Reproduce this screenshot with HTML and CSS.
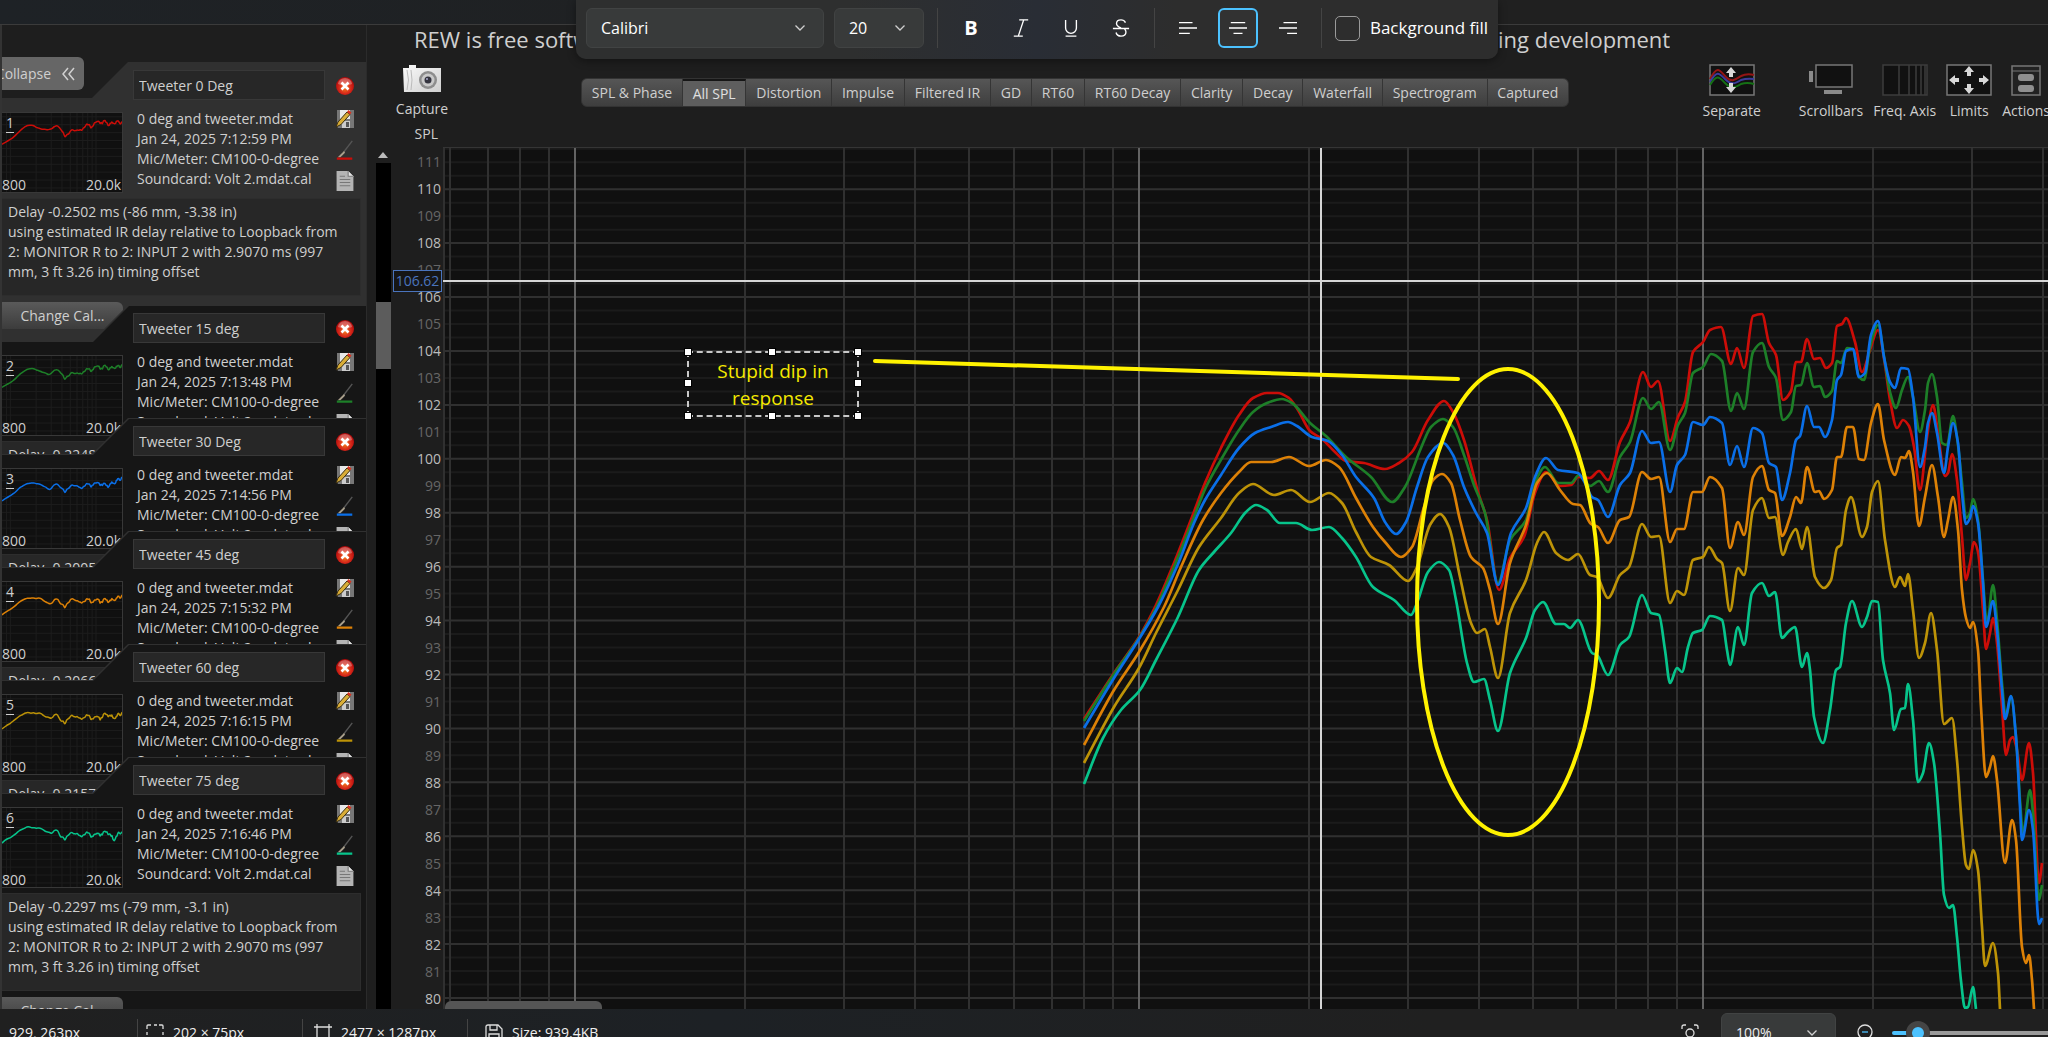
FILE: index.html
```html
<!DOCTYPE html>
<html lang="en">
<head>
  <meta charset="UTF-8">
  <meta name="viewport" content="width=device-width, initial-scale=1.0">
  <title>REW - All SPL</title>
  <link rel="stylesheet" href="styles.css">
</head>
<body>
  <svg class="defs" aria-hidden="true">
    <defs>
      <radialGradient id="redBall" cx="50%" cy="60%" r="55%">
        <stop offset="0" stop-color="#f5811e"/><stop offset=".6" stop-color="#d6281a"/><stop offset="1" stop-color="#b00a0a"/>
      </radialGradient>
      <linearGradient id="camBody" x1="0" y1="0" x2="1" y2="1">
        <stop offset="0" stop-color="#fafafa"/><stop offset="1" stop-color="#cfcfcf"/>
      </linearGradient>
    </defs>
    <symbol id="ic-close" viewBox="0 0 18 18">
      <circle cx="9" cy="9" r="9" fill="url(#redBall)"/>
      <path d="M2 7a7 6 0 0 1 14 0q-7 3-14 0z" fill="#fff" opacity=".3"/>
      <path d="M5.5 5.5l7 7M12.500 5.500l-7 7" stroke="#fff" stroke-width="2.600"/>
    </symbol>
    <symbol id="ic-edit" viewBox="0 0 20 20">
      <path d="M2 1h17v18H3l-1-2z" fill="#777"/>
      <path d="M5 1h10v9H5z" fill="#e8e8e8"/><path d="M7 12h8v7H7z" fill="#ccc"/><path d="M11 13h3v5h-3z" fill="#555"/>
      <path d="M1 18l2-5L12 3l3 2.500L6 15.500z" fill="#d9ad36" stroke="#3b2f12"/>
      <path d="M12 3l1.500-2 3 2.500L15 5.500z" fill="#d8331f"/>
    </symbol>
    <symbol id="ic-pen" viewBox="0 0 18 22">
      <path d="M17 1L7 14" stroke="#555" stroke-width="1.500"/><path d="M8 12l-7 7 3 0 5-5z" fill="#aaa08c"/>
      <path d="M0 20.500h17" stroke="currentColor" stroke-width="2.500"/>
    </symbol>
    <symbol id="ic-note" viewBox="0 0 16 19">
      <path d="M0 0h11l5 5v14H0z" fill="#b4b4b4"/><path d="M11 0v5h5" fill="#e4e4e4" stroke="#777"/>
      <path d="M3 5h5M3 8h10M3 11h10M3 14h10" stroke="#777"/>
    </symbol>
    <symbol id="ic-chev" viewBox="0 0 12 12">
      <path d="M1.500 3.500L6 8l4.500-4.500" fill="none" stroke="#d0d0d0" stroke-width="1.300"/>
    </symbol>
  </svg>

  <header class="topbar">
    <form class="format-bar">
      <div class="pick pick-font">
        <select aria-label="Font"><option>Calibri</option></select>
        <svg><use href="#ic-chev"/></svg>
      </div>
      <div class="pick pick-size">
        <select aria-label="Font size"><option>20</option></select>
        <svg><use href="#ic-chev"/></svg>
      </div>
      <span class="divider"></span>
      <div class="tools">
        <button type="button" class="tool bold" aria-label="Bold">B</button>
        <button type="button" class="tool" aria-label="Italic"><svg viewBox="0 0 20 20"><path d="M8 1h10M2 19h10M13 1L7 19"/></svg></button>
        <button type="button" class="tool" aria-label="Underline"><svg viewBox="0 0 20 20"><path d="M4 1v9a6 6 0 0 0 12 0V1M4 19h12"/></svg></button>
        <button type="button" class="tool" aria-label="Strikethrough"><svg viewBox="0 0 20 20"><path d="M15 4c-1-2-3-3-5-3-3 0-5 1.500-5 4 0 3 2.500 4 5 5M14 11c1 1 1.500 2 1.500 3.500 0 3-2.500 4.500-5.500 4.500s-5-1.500-5.500-4M1 10.500h18"/></svg></button>
      </div>
      <span class="divider"></span>
      <div class="tools">
        <button type="button" class="tool" aria-label="Align left"><svg viewBox="0 0 20 20"><path d="M0 4h15M0 10h20M0 16h12"/></svg></button>
        <button type="button" class="tool active" aria-label="Align center"><svg viewBox="0 0 20 20"><path d="M2 4h16M0 10h20M5 16h10"/></svg></button>
        <button type="button" class="tool" aria-label="Align right"><svg viewBox="0 0 20 20"><path d="M5 4h15M0 10h20M9 16h11"/></svg></button>
      </div>
      <span class="divider"></span>
      <label class="fill"><input type="checkbox"> Background fill</label>
    </form>
  </header>

  <main>
    <aside>
      <button class="collapse">Collapse <svg viewBox="0 0 14 14"><path d="M7 1L2 7l5 6M13 1L8 7l5 6"/></svg></button>
      <div class="cards" id="cards"></div>
    </aside>
    <div class="scroll">
      <i class="up"></i>
      <div class="track"><div class="thumb"></div></div>
    </div>

    <section class="graph">
      <div class="banner"><span>REW is free softw</span><span>ing development</span></div>
      <div class="actions">
        <button class="action capture">
          <svg viewBox="0 0 38 28"><path d="M6 0h7v3h25v24H1L0 3h6z" fill="url(#camBody)"/><path d="M4 5q3 10 0 20M8 5q2 10 0 20" stroke="#bbb" fill="none"/><circle cx="25" cy="15" r="9" fill="#8d8d8d"/><circle cx="25" cy="15" r="6.500" fill="#c9c9c9"/><circle cx="25" cy="15" r="3.500" fill="#34343f"/><circle cx="24" cy="14" r="1" fill="#aac"/></svg>
          Capture
        </button>
        <nav class="tabs">
          <button>SPL &amp; Phase</button><button class="on">All SPL</button><button>Distortion</button><button>Impulse</button><button>Filtered IR</button><button>GD</button><button>RT60</button><button>RT60 Decay</button><button>Clarity</button><button>Decay</button><button>Waterfall</button><button>Spectrogram</button><button>Captured</button>
        </nav>
        <div class="right-tools">
          <button class="action separate">
            <svg viewBox="0 0 46 32"><rect x="1" y="1" width="44" height="30" fill="#111" stroke="#777" stroke-width="1.500"/>
              <g fill="none" stroke-width="2"><path d="M1 15C8 2 10 5 16 12s10 4 16 0q6-3 13-1" stroke="#941515"/><path d="M1 18C8 6 10 9 16 15s10 5 16 1q6-2 13-1" stroke="#3c3c9a"/><path d="M1 21C8 10 10 13 16 19s10 5 16 1q6-2 13 0" stroke="#157015"/></g>
              <path d="M22 3l5 6h-3v4h-4V9h-3zM22 29l5-6h-3v-4h-4v4h-3z" fill="#d8d8d8"/></svg>
            Separate
          </button>
          <button class="action">
            <svg viewBox="0 0 46 32"><rect x="8" y="1" width="36" height="22" fill="#111" stroke="#777" stroke-width="1.500"/><path d="M1 7h4v11H1zM16 26h18v4H16z" fill="#8a8a8a"/></svg>
            Scrollbars
          </button>
          <button class="action">
            <svg viewBox="0 0 46 32"><rect x="1" y="1" width="44" height="30" fill="#111" stroke="#3d3d3d" stroke-width="1.500"/><path d="M17 1v30M27 1v30M34 1v30M39 1v30M43 1v30" stroke="#3d3d3d" stroke-width="1.500"/></svg>
            Freq. Axis
          </button>
          <button class="action">
            <svg viewBox="0 0 46 32"><rect x="1" y="1" width="44" height="30" fill="#111" stroke="#777" stroke-width="1.500"/><path d="M23 2l5 6h-3v4h-4V8h-3zM23 30l5-6h-3v-4h-4v4h-3zM3 16l6-5v3h4v4H9v3zM43 16l-6-5v3h-4v4h4v3z" fill="#d8d8d8"/></svg>
            Limits
          </button>
          <button class="action">
            <svg viewBox="0 0 46 32"><rect x="9" y="2" width="28" height="29" fill="#222" stroke="#777" stroke-width="1.500"/><path d="M9 7h28" stroke="#777"/><rect x="15" y="10" width="16" height="7" rx="3" fill="#8f8f8f"/><rect x="15" y="21" width="16" height="7" rx="3" fill="#8f8f8f"/></svg>
            Actions
          </button>
        </div>
      </div>
      <div class="plot-area">
        <div class="axis">
          <span class="unit">SPL</span>
          <div class="scale" id="scale"></div>
          <output class="readout">106.62</output>
        </div>
        <div class="plot">
          <svg class="chart" id="chart" viewBox="443 148 1605 861" preserveAspectRatio="none"></svg>
          <div class="note">
            Stupid dip in<br>response
            <i class="h tl"></i><i class="h tc"></i><i class="h tr"></i><i class="h ml"></i><i class="h mr"></i><i class="h bl"></i><i class="h bc"></i><i class="h br"></i>
          </div>
          <div class="hbar"></div>
        </div>
      </div>
    </section>
  </main>

  <footer>
    <div class="cell c1">929, 263px</div>
    <div class="cell c2"><svg viewBox="0 0 18 18"><path d="M1 5V2q0-1 1-1h3M8 1h3M13 1h3q1 0 1 1v3M1 8v3M17 8v3M1 13v4M17 13v4"/></svg>202 × 75px</div>
    <div class="cell c3"><svg viewBox="0 0 18 18"><path d="M3 0v18M15 0v18M0 3h18M0 15h18"/></svg>2477 × 1287px</div>
    <div class="cell c4"><svg viewBox="0 0 18 18"><path d="M3 1h10l4 4v10q0 2-2 2H3q-2 0-2-2V3q0-2 2-2zM5 1v5h7V1M4 17v-7h10v7"/></svg>Size: 939.4KB</div>
    <div class="zoom">
      <svg class="fit" viewBox="0 0 18 18"><path d="M1 5V3q0-2 2-2h2M13 1h2q2 0 2 2v2M1 13v2q0 2 2 2h2M17 13v2q0 2-2 2h-2"/><circle cx="9" cy="9" r="4"/></svg>
      <div class="pick pick-zoom">
        <select aria-label="Zoom"><option>100%</option></select>
        <svg><use href="#ic-chev"/></svg>
      </div>
      <svg class="out" viewBox="0 0 18 18"><circle cx="9" cy="8" r="7"/><path d="M14 13l3 3"/><path class="minus" d="M6 8h6"/></svg>
      <input type="range" aria-label="Zoom level" min="0" max="100" value="9">
    </div>
  </footer>
  <script src="app.js"></script>
</body>
</html>
```
FILE: styles.css
```css
* { box-sizing: border-box; }
body {
  margin: 0;
  height: 100vh;
  display: flex;
  flex-direction: column;
  overflow: hidden;
  background: #1e1e1e;
  color: #cfcfcf;
  font: 14px/20px "Open Sans", "Noto Sans", sans-serif;
}
button, select, input { font: inherit; color: inherit; }
button { border: 0; padding: 0; background: none; }
.defs { position: absolute; width: 0; height: 0; }

/* text formatting bar */
.topbar {
  flex: none;
  height: 25px;
  background: linear-gradient(90deg, #1e2226, #202020 60%);
  border-bottom: 1px solid #3b3b3b;
  display: flex;
  justify-content: center;
  padding-left: 26px;
}
.format-bar {
  position: relative;
  z-index: 2;
  flex: none;
  height: 59px;
  padding: 0 10px 3px;
  display: flex;
  align-items: center;
  background: linear-gradient(90deg, #2e2f2f 30%, #292d35 50%, #2d2d2d 65%);
  border-radius: 0 0 10px 10px;
  box-shadow: 0 2px 8px rgba(0, 0, 0, .4);
  color: #fff;
  font-size: 16px;
}
.pick { position: relative; }
.pick select {
  width: 100%;
  height: 40px;
  padding: 0 14px;
  appearance: none;
  background: #383a3a;
  border: 1px solid #414343;
  border-radius: 6px;
}
.pick svg { position: absolute; right: 18px; top: 14px; width: 12px; height: 12px; }
.pick-font { width: 238px; margin-right: 10px; }
.pick-size { width: 90px; }
.divider { width: 1px; height: 40px; margin: 0 13px; background: #444; }
.tools { display: flex; gap: 10px; }
.tool { width: 40px; height: 40px; border-radius: 6px; border: 2px solid transparent; }
.tool svg { width: 18px; height: 18px; display: block; margin: auto; fill: none; stroke: #fff; stroke-width: 1.5; }
.tool.active { border-color: #4cc2ff; background: #323232; }
.bold { font-weight: 700; font-size: 20px; }
.fill { display: flex; align-items: center; gap: 10px; font-size: 17px; }
.fill input {
  appearance: none;
  width: 25px;
  height: 25px;
  margin: 0;
  border: 1px solid #9a9a9a;
  border-radius: 5px;
}

main { flex: 1; min-height: 0; display: flex; border-left: 2px solid #333; }

/* measurement list */
aside {
  width: 365px;
  flex: none;
  overflow: hidden;
  border-right: 1px solid #2b2b2b;
  padding-top: 32px;
}
.collapse {
  position: relative;
  z-index: 1;
  width: 82px;
  height: 33px;
  margin-bottom: -28px;
  background: #666;
  border-radius: 0 6px 6px 0;
  display: flex;
  align-items: center;
  justify-content: flex-end;
  gap: 10px;
  padding-right: 9px;
  overflow: hidden;
}
.collapse svg { flex: none; width: 14px; height: 14px; fill: none; stroke: #d0d0d0; stroke-width: 1.5; }
.card {
  position: relative;
  height: 280px;
  margin-top: -167px;
  display: grid;
  grid-template-columns: 121px 192px 20px;
  grid-template-rows: 30px 90px 98px 27px;
  column-gap: 10px;
  padding-top: 8px;
  background: #303030;
  clip-path: polygon(0 36px, 90px 36px, 126px 0, 100% 0, 100% 100%, 0 100%);
}
.card::before {
  content: "";
  position: absolute;
  inset: 0;
  background: #161616;
  clip-path: polygon(0 37px, 91px 37px, 127px 1px, 100% 1px, 100% 100%, 0 100%);
}
.card > * { position: relative; }
.card:first-child { margin-top: 0; }
.card:nth-child(2) { margin-top: -37px; }
.card.selected::before { background: #303030; }
.title {
  grid-column: 2;
  width: 100%;
  min-width: 0;
  height: 30px;
  padding: 0 5px;
  background: #272727;
  border: 1px solid #383838;
}
.close { width: 18px; height: 18px; margin: 7px 0 0 1px; }
.close svg { display: block; width: 18px; height: 18px; }
.mini { grid-row: 2; grid-column: 1; margin-top: 12px; height: 81px; border: 1px solid #383838; border-left: 0; background: #101010; }
.mini svg { display: block; width: 100%; height: 100%; }
.mini b { position: absolute; left: 4px; top: 1px; font-weight: 400; border-bottom: 1px solid #cfcfcf; line-height: 18px; }
.mini span { position: absolute; bottom: -3px; left: 0; }
.mini span + span { left: auto; right: 1px; }
.info { grid-column: 2; padding: 9px 0 0 4px; white-space: nowrap; overflow: hidden; }
.icons { display: flex; flex-direction: column; padding-top: 9px; gap: 11px; }
.icons svg { display: block; flex: none; width: 20px; height: 20px; }
.notes { grid-column: 1 / 4; margin: 8px -6px 0 0; height: 98px; padding: 3px 6px; background: #272727; border: 1px solid #2d2d2d; border-left: 0; }
.cal { grid-row: 4; grid-column: 1; margin-top: 14px; height: 27px; background: linear-gradient(#5a5a5a, #3c3c3c); border-radius: 0 6px 0 0; }

.scroll { flex: none; width: 25px; padding: 125px 0 0 9px; }
.up { display: block; width: 0; height: 0; margin: 2px 0 5px 2px; border: 5px solid transparent; border-top: 0; border-bottom: 6px solid #bbb; }
.track { width: 15px; height: 100%; padding-top: 139px; background: #000; }
.thumb { height: 67px; background: #5c5c5c; }

/* graph */
.graph { flex: 1; min-width: 0; display: flex; flex-direction: column; }
.banner { height: 32px; padding-left: 22px; font-size: 22px; line-height: 28px; white-space: nowrap; display: flex; }
.banner span { width: 162px; overflow: hidden; }
.banner span + span { width: auto; margin-left: 922px; }
.actions { display: flex; align-items: flex-start; height: 66px; flex: none; }
.action { display: flex; flex-direction: column; align-items: center; white-space: nowrap; line-height: 18px; padding-top: 7px; }
.action svg { width: 46px; height: 32px; margin-bottom: 6px; }
.capture { width: 60px; margin-right: 129px; }
.capture svg { width: 38px; height: 28px; margin: 1px 0 7px; }
.tabs { display: flex; flex: none; width: 988px; height: 29px; margin-top: 21px; background: linear-gradient(#565656, #3e3e3e); border: 1px solid #333; border-radius: 6px; }
.tabs button { flex: auto; border-right: 1px solid #353535; padding: 1px 8px 0; }
.tabs button:last-child { border: 0; }
.tabs .on { background: #5e5e5e; border-top: 2px solid #151515; padding-top: 0; color: #e0e0e0; }
.right-tools { margin-left: auto; display: flex; gap: 10px; margin-right: -2px; }
.right-tools .separate { margin-right: 28px; }

.plot-area { flex: 1; min-height: 0; display: flex; margin-top: 24px; }
.axis { position: relative; width: 51px; flex: none; text-align: right; padding-right: 2px; }
.unit { position: absolute; right: 5px; top: -23px; }
.scale { height: 100%; overflow: hidden; padding-top: 1px; }
.scale span { display: block; line-height: 27px; color: #666; }
.scale .even { color: #bcbcbc; }
.readout {
  position: absolute;
  right: 1px;
  top: 123px;
  width: 49px;
  height: 22px;
  background: #161616;
  border: 1px solid #4a74bd;
  color: #4a74bd;
  text-align: center;
}
.plot { position: relative; flex: 1; min-width: 0; background: #101010; border-top: 1px solid #353535; overflow: hidden; }
.chart { position: absolute; inset: 0; width: 100%; height: 100%; }
.chart *, .mini svg * { vector-effect: non-scaling-stroke; fill: none; }
.trace { stroke-width: 2.7; stroke-linejoin: round; }
.mini .trace { stroke-width: 1.5; }
.grid { stroke: #1b1b1b; stroke-width: 2; }
.grid.major { stroke: #303030; }
.grid.decade { stroke: #636363; }
.mini .grid { stroke: #1d1d1d; stroke-width: 1; }
.cursor { stroke: #d5d5d5; stroke-width: 2; }
.marker { stroke: #fff200; stroke-width: 4; stroke-linecap: round; }
.note {
  position: absolute;
  left: 244px;
  top: 203px;
  width: 172px;
  height: 66px;
  padding-top: 5px;
  border: 2px dashed #c8c8c8;
  color: #f5e900;
  font-size: 19px;
  line-height: 27px;
  text-align: center;
}
.h { position: absolute; width: 6px; height: 6px; margin: -4px; background: #fff; outline: 1px solid #000; }
.tl, .ml, .bl { left: 0; }
.tc, .bc { left: 50%; }
.tr, .mr, .br { right: 0; }
.tl, .tc, .tr { top: 0; }
.ml, .mr { top: 50%; }
.bl, .bc, .br { bottom: 0; }
.hbar { position: absolute; left: 2px; bottom: 0; width: 157px; height: 8px; background: #555; border-radius: 6px 6px 0 0; }

/* status bar */
footer { flex: none; height: 28px; overflow: hidden; display: flex; background: linear-gradient(90deg, #202020, #1d2125 35%, #202020 70%); color: #eee; }
footer svg { fill: none; stroke: #ddd; stroke-width: 1.3; }
.cell { height: 48px; flex: none; display: flex; align-items: center; gap: 9px; padding-left: 9px; position: relative; }
.cell + .cell::before { content: ""; position: absolute; left: 0; top: 10px; width: 1px; height: 30px; background: #444; }
.cell svg { width: 18px; height: 18px; }
.c1 { width: 137px; }
.c2 { width: 165px; }
.c3 { width: 165px; padding-left: 12px; }
.c4 { padding-left: 18px; }
.zoom { margin-left: auto; height: 48px; display: flex; align-items: center; flex: none; }
.fit { width: 18px; height: 18px; margin-right: 22px; }
.pick-zoom { width: 115px; margin-right: 20px; }
.out { width: 18px; height: 18px; margin-right: 18px; }
.out .minus { stroke: #4cc2ff; }
.zoom input {
  appearance: none;
  width: 180px;
  height: 4px;
  margin: 0 -24px 0 0;
  border-radius: 2px;
  background: linear-gradient(90deg, #4cc2ff 26px, #9a9a9a 26px);
}
.zoom input::-webkit-slider-thumb { appearance: none; width: 24px; height: 24px; border-radius: 50%; background: #4cc2ff; border: 6px solid #454545; }
```
FILE: app.js
```js
// plot coordinates: 1 kHz sits at x=1139, one decade is 564 wide, 1 dB is 26.96 high
const xOf = f => 1139 + 564 * Math.log10(f / 1000);
const yOf = db => 458.8 + (100 - db) * 26.96;

const measurements = [
  { name: 'Tweeter 0 Deg', time: '7:12:59', color: '#cc0d08', delay: '-0.2502 ms (-86 mm, -3.38 in)',
    pts: '1084,719 1114,673 1139,637 1156,605 1174,563 1192,517 1205,483 1221,448 1239,415 1253,398 1267,393 1278,393 1289,398 1298,410 1310,431 1322,439 1335,452 1346,461 1364,463 1385,469 1399,463 1412,452 1428,420 1444,401 1453,412 1464,440 1478,492 1487,520 1499,590 1510,558 1524,537 1535,493 1546,472 1560,486 1571,485 1578,477 1590,478 1599,471 1608,480 1620,442 1630,422 1643,372 1651,387 1658,381 1670,441 1678,417 1685,402 1693,352 1703,342 1710,330 1721,327 1731,364 1737,348 1744,368 1753,316 1762,314 1769,343 1776,355 1783,400 1791,391 1796,362 1801,362 1807,339 1814,359 1820,358 1826,368 1832,363 1837,326 1842,324 1846,318 1855,342 1862,372 1870,350 1878,330 1885,365 1890,400 1897,428 1903,420 1909,426 1914,447 1920,490 1927,437 1933,405 1938,433 1945,476 1948,473 1952,454 1957,480 1962,537 1966,580 1970,563 1974,542 1978,552 1983,610 1986,649 1990,633 1993,618 1997,643 2002,707 2006,755 2010,740 2013,737 2017,750 2022,780 2029,743 2033,773 2039,883 2042,863' },
  { name: 'Tweeter 15 deg', time: '7:13:48', color: '#1d7f28', delay: '-0.2248 ms (-77 mm, -3.04 in)',
    pts: '1084,721 1114,674 1139,638 1156,608 1176,562 1194,517 1206,487 1222,458 1239,430 1253,412 1267,403 1282,399 1292,403 1310,423 1326,436 1346,457 1371,477 1392,502 1405,487 1421,448 1431,427 1443,419 1453,427 1464,455 1474,485 1485,513 1498,583 1510,540 1526,520 1535,483 1545,467 1558,483 1571,483 1579,475 1590,486 1599,481 1608,492 1620,457 1630,442 1643,398 1651,409 1659,402 1670,450 1678,425 1685,413 1693,373 1703,367 1711,354 1722,361 1731,411 1737,393 1744,409 1753,352 1762,343 1769,367 1776,378 1783,420 1791,412 1796,386 1801,385 1807,363 1814,387 1820,386 1825,397 1832,391 1837,361 1841,363 1847,348 1853,349 1859,377 1864,380 1870,347 1878,325 1885,363 1890,392 1896,408 1902,390 1908,377 1913,397 1920,432 1925,410 1928,383 1932,374 1937,397 1942,443 1947,445 1953,416 1957,437 1962,483 1966,518 1970,513 1973,499 1978,520 1983,580 1987,623 1993,585 1997,620 2002,683 2006,717 2011,696 2016,737 2020,800 2023,833 2030,790 2033,813 2039,900 2042,885' },
  { name: 'Tweeter 30 Deg', time: '7:14:56', color: '#0a6fe8', delay: '-0.2005 ms (-69 mm, -2.71 in)',
    pts: '1084,728 1114,678 1139,639 1158,607 1178,564 1194,523 1205,500 1221,475 1239,448 1255,433 1271,427 1288,422 1297,426 1312,437 1328,441 1342,455 1356,477 1374,498 1385,522 1396,534 1406,522 1417,487 1428,457 1443,443 1453,455 1464,487 1476,513 1487,533 1498,585 1511,533 1526,508 1535,477 1546,458 1558,470 1578,473 1585,483 1592,497 1598,500 1608,517 1620,485 1630,473 1642,431 1651,443 1659,442 1670,492 1677,465 1685,455 1693,422 1703,425 1710,417 1722,423 1730,465 1737,446 1744,467 1753,428 1762,433 1769,463 1776,467 1782,500 1790,473 1796,440 1800,436 1807,406 1814,427 1819,427 1825,437 1832,420 1837,380 1841,375 1846,351 1853,349 1859,377 1865,373 1871,335 1878,321 1884,357 1890,382 1895,388 1901,368 1908,369 1913,397 1920,467 1925,447 1928,423 1932,413 1937,433 1944,473 1948,447 1953,423 1958,443 1962,493 1966,524 1970,518 1973,506 1978,523 1983,583 1986,627 1993,601 1997,630 2002,690 2005,719 2011,696 2016,737 2020,807 2022,840 2029,810 2033,830 2039,924 2042,918' },
  { name: 'Tweeter 45 deg', time: '7:15:32', color: '#dd8106', delay: '-0.2066 ms (-71 mm, -2.79 in)',
    pts: '1084,745 1114,690 1139,652 1164,607 1181,567 1203,520 1221,493 1239,472 1251,462 1271,462 1289,457 1309,466 1326,460 1339,467 1356,498 1373,527 1385,542 1401,557 1412,547 1424,507 1433,480 1442,474 1451,483 1460,520 1471,557 1483,568 1490,590 1498,624 1510,563 1526,525 1537,483 1547,473 1560,490 1573,504 1580,505 1591,524 1598,527 1608,543 1620,520 1629,517 1642,472 1651,479 1659,477 1670,542 1677,529 1684,529 1693,492 1702,492 1710,477 1722,488 1730,548 1738,522 1744,535 1753,477 1762,466 1769,490 1775,493 1782,536 1790,517 1796,497 1801,503 1807,467 1815,492 1819,491 1824,499 1832,490 1837,457 1841,457 1847,427 1853,427 1859,459 1864,460 1871,423 1878,404 1884,440 1895,475 1901,457 1905,458 1909,451 1913,472 1919,526 1925,497 1932,465 1938,497 1944,537 1948,520 1953,497 1958,530 1962,590 1966,618 1970,628 1973,622 1978,650 1981,707 1986,777 1990,767 1993,756 1997,780 2005,863 2012,820 2016,840 2022,947 2026,963 2029,955 2032,980 2034,1009' },
  { name: 'Tweeter 60 deg', time: '7:16:15', color: '#bd9307', delay: '-0.2157 ms (-74 mm, -2.91 in)',
    pts: '1084,763 1114,707 1139,668 1156,633 1178,590 1199,547 1221,518 1239,493 1253,484 1274,495 1291,490 1310,502 1329,493 1342,503 1356,532 1371,557 1389,565 1408,581 1417,567 1430,525 1440,514 1449,527 1460,577 1471,623 1477,633 1485,629 1490,647 1498,678 1510,613 1526,580 1537,543 1544,532 1556,553 1568,560 1578,554 1590,575 1597,577 1608,598 1620,575 1629,567 1642,524 1651,537 1659,536 1670,603 1677,591 1684,595 1693,560 1703,557 1709,547 1717,559 1722,563 1730,611 1738,568 1744,575 1753,510 1762,498 1769,518 1775,517 1783,555 1788,542 1796,529 1802,549 1807,527 1815,577 1824,588 1831,580 1837,548 1841,545 1846,510 1851,497 1862,537 1867,527 1872,492 1878,481 1885,540 1895,587 1900,577 1905,586 1908,574 1913,610 1919,658 1925,643 1931,613 1937,650 1944,724 1952,718 1957,760 1962,827 1966,865 1969,869 1973,850 1978,870 1982,927 1985,966 1993,943 1998,973 2000,1009' },
  { name: 'Tweeter 75 deg', time: '7:16:46', color: '#07c48b', delay: '-0.2297 ms (-79 mm, -3.1 in)',
    pts: '1084,784 1103,738 1121,710 1140,690 1156,660 1178,617 1199,570 1214,552 1231,533 1246,512 1256,505 1267,510 1280,523 1296,523 1312,530 1329,527 1342,538 1356,557 1373,587 1394,600 1411,615 1417,603 1428,572 1439,562 1449,570 1456,600 1467,663 1474,682 1484,679 1490,700 1498,731 1510,673 1526,638 1535,610 1543,602 1556,624 1564,624 1570,628 1578,620 1592,653 1597,655 1608,675 1620,645 1629,637 1642,595 1651,613 1659,615 1665,650 1670,683 1677,668 1682,672 1688,647 1693,633 1702,630 1710,616 1722,620 1727,650 1730,665 1738,627 1744,645 1752,593 1762,583 1769,596 1775,592 1782,638 1788,632 1795,627 1802,667 1807,653 1810,670 1814,717 1823,743 1830,710 1836,670 1840,667 1846,623 1852,601 1862,627 1867,617 1872,601 1878,602 1883,660 1890,693 1894,730 1901,709 1905,708 1908,684 1913,720 1918,782 1923,773 1929,743 1934,763 1940,833 1944,895 1949,908 1953,905 1957,937 1961,981 1965,1008 1968,1007 1973,987 1976,1009' }
];

// smooth curve through the points; tangents go flat at peaks and dips
function curve(str) {
  const p = str.split(' ').map(s => s.split(',').map(Number));
  const slope = p.map((q, i) => {
    if (i === 0 || i === p.length - 1) return null;
    const a = (q[1] - p[i - 1][1]) / (q[0] - p[i - 1][0]);
    const b = (p[i + 1][1] - q[1]) / (p[i + 1][0] - q[0]);
    return a * b <= 0 ? 0 : 2 * a * b / (a + b);
  });
  let d = `M${p[0]}`;
  for (let i = 1; i < p.length; i++) {
    const [x0, y0] = p[i - 1], [x1, y1] = p[i];
    const h = (x1 - x0) / 3, s = (y1 - y0) / (x1 - x0);
    d += `C${x0 + h},${y0 + h * (slope[i - 1] ?? s)} ${x1 - h},${y1 - h * (slope[i] ?? s)} ${x1},${y1}`;
  }
  return d;
}

const line = (x1, y1, x2, y2, cls) => `<line x1="${x1}" y1="${y1}" x2="${x2}" y2="${y2}" class="${cls}"/>`;
const trace = m => `<path class="trace" stroke="${m.color}" d="${curve(m.pts)}"/>`;

let chart = '';
for (let db = 79.5; db <= 111.5; db += 0.5) {
  if (db % 2 !== 0) chart += line(443, yOf(db), 2048, yOf(db), 'grid');
}
for (let db = 80; db <= 110; db += 2) chart += line(443, yOf(db), 2048, yOf(db), 'grid major');
for (let dec = 10; dec <= 10000; dec *= 10) {
  for (let n = 1; n < 10; n++) {
    const x = Math.round(xOf(dec * n));
    if (x > 443 && x < 2048) chart += line(x, 148, x, 1009, n === 1 ? 'grid decade' : 'grid major');
  }
}
chart += line(444, 148, 444, 1009, 'grid major');
chart += measurements.map(trace).join('');
chart += line(443, 281, 2048, 281, 'cursor') + line(1321, 148, 1321, 1009, 'cursor');
chart += line(875, 361, 1458, 379, 'marker') + '<ellipse class="marker" cx="1508" cy="602" rx="91" ry="233"/>';
document.getElementById('chart').innerHTML = chart;

let labels = '';
for (let db = 111; db >= 80; db--) labels += `<span class="${db % 2 ? '' : 'even'}">${db}</span>`;
document.getElementById('scale').innerHTML = labels;

let miniGrid = '';
for (let y = 250; y < 1530; y += 135) miniGrid += line(1084, y, 1884, y, 'grid');
for (const f of [900, 1000, 2000, 3000, 4000, 5000, 6000, 7000, 8000, 9000, 10000]) {
  miniGrid += line(xOf(f), 185, xOf(f), 1534, 'grid');
}

document.getElementById('cards').innerHTML = measurements.map((m, i) => `
  <article class="card ${i === 0 ? 'selected' : ''}">
    <input class="title" value="${m.name}" aria-label="Measurement name">
    <button class="close" aria-label="Remove"><svg><use href="#ic-close"/></svg></button>
    <div class="mini">
      <svg viewBox="1084 185 790 1349" preserveAspectRatio="none">${miniGrid}${trace(m)}</svg>
      <b>${i + 1}</b><span>800</span><span>20.0k</span>
    </div>
    <div class="info">0 deg and tweeter.mdat<br>Jan 24, 2025 ${m.time} PM<br>Mic/Meter: CM100-0-degree<br>Soundcard: Volt 2.mdat.cal</div>
    <div class="icons">
      <svg><use href="#ic-edit"/></svg>
      <svg color="${m.color}"><use href="#ic-pen"/></svg>
      <svg><use href="#ic-note"/></svg>
    </div>
    <div class="notes">Delay ${m.delay}<br>using estimated IR delay relative to Loopback from<br>2: MONITOR R to 2: INPUT 2 with 2.9070 ms (997<br>mm, 3 ft 3.26 in) timing offset</div>
    <button class="cal">Change Cal...</button>
  </article>`).join('');
```
